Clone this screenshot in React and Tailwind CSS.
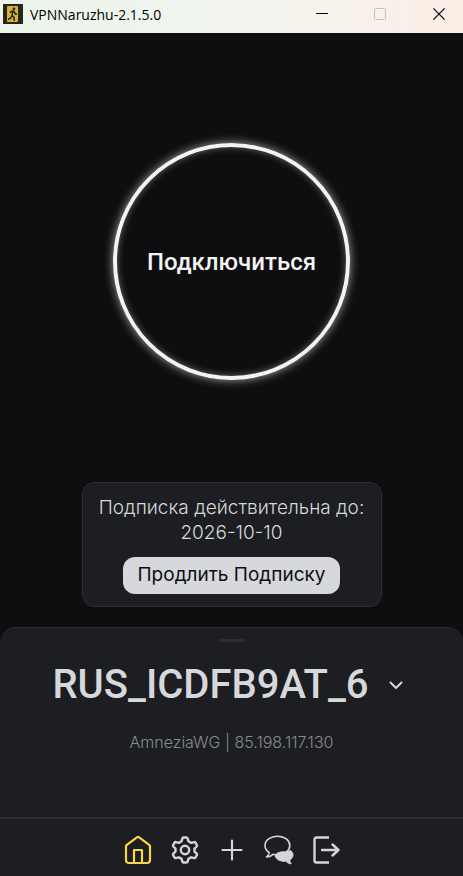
import React from 'react';

function AppLogo() {
  return (
    <svg width="20" height="20" viewBox="0 0 20 20" aria-hidden="true">
      <rect width="20" height="20" fill="#26251f" />
      <rect x="4" y="2" width="11" height="16" rx="1" fill="#d9b238" />
      <circle cx="11" cy="5" r="1.4" fill="#26251f" />
      <path d="M7 8.5l2.5-1.5 1.8 1L12.5 10H14M10 7.5l-1 4 2.2 2V17M9 11.5L7.8 14 5 15.5" fill="none" stroke="#26251f" strokeWidth="1.5" strokeLinejoin="round" />
    </svg>
  );
}

function TitleBar({ title }) {
  return (
    <header className="flex h-[33px] items-start justify-between bg-linear-to-r from-[#eaf4ea] via-[#f2f5ef] to-[#fbeee6] text-black">
      <div className="flex h-7 items-center gap-[7px] pl-[3px]">
        <AppLogo />
        <span className="pt-px font-['Open_Sans','Noto_Sans',sans-serif] text-sm">{title}</span>
      </div>
      <div className="flex h-7 items-center">
        <button type="button" aria-label="Свернуть" className="flex h-7 w-[58px] items-center justify-center">
          <svg width="12" height="12" viewBox="0 0 12 12"><path d="M0 5.5h12" stroke="#000" /></svg>
        </button>
        <button type="button" aria-label="Развернуть" disabled className="mr-1.5 flex h-7 w-[58px] items-center justify-center">
          <svg width="12" height="12" viewBox="0 0 12 12"><rect x=".5" y=".5" width="11" height="11" rx="1" fill="none" stroke="#c5bfb8" /></svg>
        </button>
        <button type="button" aria-label="Закрыть" className="flex h-7 w-12 items-center justify-center">
          <svg width="12" height="12" viewBox="0 0 12 12"><path d="M.4.4l11.2 11.2M11.6.4L.4 11.6" stroke="#000" strokeWidth="1.2" /></svg>
        </button>
      </div>
    </header>
  );
}

function HomeIcon() {
  return (
    <svg width="28" height="30" viewBox="0 0 28 30" fill="none" stroke="currentColor" strokeWidth="2.2" strokeLinejoin="round">
      <path d="M2 11.5Q2 10.5 2.8 9.8L12.9 2.3Q14 1.5 15.1 2.3L25.2 9.8Q26 10.5 26 11.5V25Q26 28 23 28H5Q2 28 2 25Z" />
      <path d="M10 28V15h8v13" />
    </svg>
  );
}

function GearIcon() {
  return (
    <svg width="28" height="30" viewBox="0 0 28 30" fill="none" stroke="currentColor" strokeWidth="2.4" strokeLinejoin="round">
      <path d="M12.5 2.5h3Q16.4 2.5 16.6 3.4L17.4 6.3 20.2 7.9 23.2 7.1Q24 6.9 24.4 7.6L25.9 10.2Q26.3 10.9 25.7 11.5L23.5 13.6V16.6L25.7 18.7Q26.3 19.3 25.9 20L24.4 22.6Q24 23.3 23.2 23.1L20.2 22.3 17.4 23.9 16.6 26.7Q16.4 27.5 15.5 27.5H12.5Q11.6 27.5 11.4 26.7L10.6 23.9 7.8 22.3 4.8 23.1Q4 23.3 3.6 22.6L2.1 20Q1.7 19.3 2.3 18.7L4.5 16.6V13.6L2.3 11.5Q1.7 10.9 2.1 10.2L3.6 7.6Q4 6.9 4.8 7.1L7.8 7.9 10.6 6.3 11.4 3.4Q11.6 2.5 12.5 2.5Z" />
      <circle cx="14" cy="15" r="4.2" />
    </svg>
  );
}

function PlusIcon() {
  return (
    <svg width="28" height="30" viewBox="0 0 28 30" fill="none" stroke="currentColor" strokeWidth="2.2" strokeLinecap="round">
      <path d="M14 5.5v19M4.500 15h19" />
    </svg>
  );
}

function ChatIcon() {
  return (
    <svg className="shrink-0" width="30" height="30" viewBox="0 0 30 30" fill="none" stroke="currentColor" strokeWidth="1.6" strokeLinejoin="round">
      <path d="M13.5 1.2C6.5 1.2 1 5.4 1 10.6c0 3 1.7 5.500 4.300 7.100-.3 1.800-1.200 3.200-2.800 4.300 2.800 0 4.900-.9 6.500-2.700 1.400.4 3 .7 4.500.7 7 0 12.300-4.200 12.300-9.400S20.500 1.200 13.500 1.200Z" />
      <path d="M26.500 15.500c1.600 1.100 2.500 2.700 2.500 4.400 0 2-1.300 3.900-3.300 5 .1 1.500.6 2.900 1.500 4-2.200-.2-4-1.200-5.200-2.700-5 .6-9.800-1.500-10.800-5.200C11.500 18 16 16.800 19.500 16.800c3 .2 5.500-.3 7-1.300Z" fill="currentColor" strokeWidth="1" />
    </svg>
  );
}

function ExitIcon() {
  return (
    <svg width="28" height="30" viewBox="0 0 28 30" fill="none" stroke="currentColor" strokeWidth="2.4">
      <path d="M17 2.500H4.500Q2.500 2.500 2.500 4.500v21Q2.500 27.500 4.500 27.500H17" />
      <path d="M10 15h16.500M20.500 9.500l6 5.500-6 5.500" strokeLinejoin="round" strokeLinecap="round" />
    </svg>
  );
}

const NAV_ITEMS = [
  { label: 'Главная', Icon: HomeIcon, active: true },
  { label: 'Настройки', Icon: GearIcon },
  { label: 'Добавить', Icon: PlusIcon },
  { label: 'Поддержка', Icon: ChatIcon },
  { label: 'Выйти', Icon: ExitIcon },
];

function BottomNav() {
  return (
    <nav className="flex justify-center gap-[19px] border-t-2 border-[#2d2e31] pt-4 pb-[11px]">
      {NAV_ITEMS.map(({ label, Icon, active }) => (
        <button
          key={label}
          type="button"
          aria-label={label}
          className={`flex h-[30px] w-7 items-center justify-center ${active ? 'text-[#f8d648]' : 'text-[#d3d5d7]'}`}
        >
          <Icon />
        </button>
      ))}
    </nav>
  );
}

function SubscriptionCard({ until }) {
  return (
    <section className="flex w-[300px] flex-col items-center rounded-xl border border-[#2b2d30] bg-[#1c1e21] py-3 text-center font-['Inter',sans-serif] text-[19px]">
      <p className="leading-[25px] font-light text-[#d7d8db]">
        Подписка действительна до:
        <br />
        {until}
      </p>
      <button type="button" className="mt-3 h-[37px] rounded-xl bg-[#d7d8db] px-3.5 text-[#0e0e11]">
        Продлить Подписку
      </button>
    </section>
  );
}

function ServerPanel({ name, protocol, address }) {
  return (
    <section className="flex flex-col items-center rounded-t-2xl border-t border-[#2b2d30] pt-[11px] pb-[65px]">
      <div className="h-[3px] w-[26px] rounded-full bg-[#2d2e31]" />
      <button type="button" className="mt-[18px] mr-2 flex items-center gap-5 text-[#d7d8db]">
        <span className="text-[40px] leading-[50px] font-medium">{name}</span>
        <svg width="14" height="9" viewBox="0 0 14 9" fill="none" stroke="currentColor" strokeWidth="2" strokeLinecap="round" strokeLinejoin="round">
          <path d="M1.5 1.5L7 7l5.5-5.5" />
        </svg>
      </button>
      <p className="mt-[22px] font-['Inter',sans-serif] text-base leading-5 font-light text-[#878b91]">
        {protocol} | {address}
      </p>
    </section>
  );
}

export default function App() {
  return (
    <div className="flex min-h-screen flex-col bg-[#0e0e10] font-['Roboto',sans-serif]">
      <TitleBar title="VPNNaruzhu-2.1.5.0" />
      <main className="flex grow flex-col items-center pt-[110px] pb-5">
        <button
          type="button"
          className="mb-8 size-[237px] rounded-full border-4 border-[#f3f3f3] text-2xl font-medium text-[#f3f3f3] shadow-[0_0_10px_#ffffffa0,inset_0_0_7px_#ffffff60]"
        >
          Подключиться
        </button>
        <div className="mt-auto">
          <SubscriptionCard until="2026-10-10" />
        </div>
      </main>
      <footer className="rounded-t-2xl bg-[#1c1e21]">
        <ServerPanel name="RUS_ICDFB9AT_6" protocol="AmneziaWG" address="85.198.117.130" />
        <BottomNav />
      </footer>
    </div>
  );
}
